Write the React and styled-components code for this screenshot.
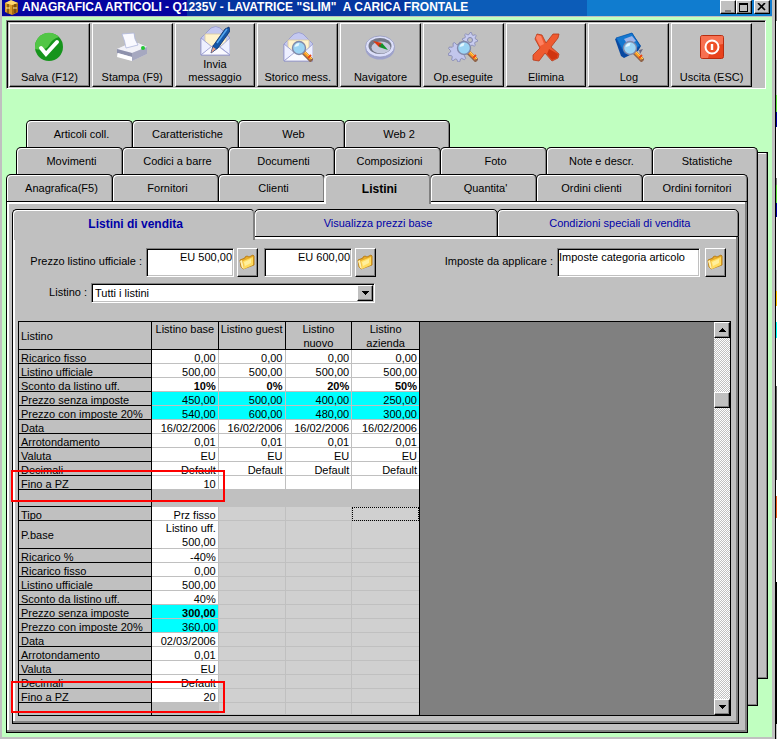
import React from "react";
import styled, { createGlobalStyle, css } from "styled-components";

const face = "#c0c0c0";
const shade = "#808080";
const mint = "#c0ffc0";

const GlobalStyle = createGlobalStyle`
  *, *::before, *::after { box-sizing: border-box; }
  body { margin: 0; background: ${face}; font: 11px/13px "Liberation Sans", Arial, sans-serif; color: #000; }
  button, input, select { font: inherit; color: inherit; margin: 0; border-radius: 0; }
`;

const Desktop = styled.div`
  display: grid;
  grid-template-columns: 1fr 1px 1px;
  min-height: 100vh;
`;
const WindowFrame = styled.main`
  display: flex;
  flex-direction: column;
  background: ${mint};
  border: solid ${face};
  border-width: 0 3px 2px 2px;
  overflow: hidden;
`;
const FrameEdge = styled.div`
  background: #000;
`;
const DesktopEdge = styled.div`
  background: linear-gradient(
    #808080 0 21px, #fff 21px 60px, #c0c0c0 60px 95px, #60e040 95px 112px, #0000a0 112px 127px,
    #fff 127px 178px, #808080 178px 185px, #60e040 185px 203px, #0000a0 203px 217px, #fff 217px 270px,
    #c0c0c0 270px 291px, #ffc000 291px 306px, #fff 306px 322px, #00ffff 322px 338px, #fff 338px 386px,
    #606060 386px 480px, #fff 480px 496px, #f06020 496px 518px, #fff 518px 582px, #000 582px 724px, #c0c0c0 724px
  );
`;

const TitleBar = styled.header`
  display: flex;
  align-items: center;
  height: 17px;
  padding: 0 2px 2px 2px;
  border-bottom: 1px solid ${face};
  background: linear-gradient(90deg, #0505a0 0 24%, #0535a0 24% 53%, #0c5cb8 53% 76%, #107ccf 76%);
`;
const Title = styled.h1`
  flex: 1;
  margin: 0 0 0 3px;
  color: #fff;
  font-size: 12px;
  line-height: 14px;
  font-weight: bold;
  white-space: pre;
`;
const raised = css`
  background: ${face};
  border: 1px solid;
  border-color: #fff #000 #000 #fff;
  box-shadow: inset -1px -1px 0 ${shade};
`;
const CaptionButton = styled.button`
  ${raised}
  display: grid;
  place-items: center;
  width: 16px;
  height: 14px;
  padding: 0;
  margin-left: ${(p) => (p.$apart ? "2px" : "0")};
`;

const Toolbar = styled.nav`
  display: grid;
  grid-template-columns: repeat(9, 1fr);
  gap: 2px;
  margin: 3px 6px 0 4px;
  padding: 2px 13px 1px 2px;
  background: ${face};
  border: 1px solid;
  border-color: ${shade} #fff #fff ${shade};
  box-shadow: inset 1px 1px 0 #000;
`;
const ToolButton = styled.button`
  ${raised}
  display: flex;
  flex-direction: column;
  align-items: center;
  justify-content: space-between;
  height: 64px;
  padding: ${(p) => (p.$tall ? "2px 0 2px" : "8px 0 2px")};
  line-height: 13px;
  white-space: pre;
  svg { display: block; }
`;

const LayerStack = styled.section`
  display: grid;
  margin: 31px 4px 4px;
`;
const Layer = styled.div`
  grid-area: 1 / 1;
  display: flex;
  flex-direction: column;
  min-width: 0;
  margin: ${(p) => `${(2 - p.$depth) * 27}px ${20 - p.$depth * 10}px ${p.$depth * 27}px ${p.$depth * 10}px`};
`;
const TabRow = styled.div`
  display: grid;
  grid-template-columns: repeat(${(p) => p.$columns}, 1fr);
  height: ${(p) => p.$height}px;
`;
const Tab = styled.button`
  background: ${face};
  border: 1px solid #000;
  border-bottom: ${(p) => (p.$seam ? "1px solid #000" : "0")};
  border-radius: 5px 5px 0 0;
  box-shadow: inset 1px 1px 0 #fff, inset -1px 0 0 ${shade};
  padding: ${(p) => (p.$behind ? "0 0 5px 4px" : "1px 0 0 4px")};
  min-width: 0;
  white-space: nowrap;
  color: ${(p) => (p.$blue ? "#0000a8" : "#000")};
  &:not(:last-child) { margin-right: -1px; }
  ${(p) => p.$active && css`
    position: relative;
    z-index: 1;
    font-weight: bold;
    font-size: 12px;
    border-bottom: 0;
    border-left-color: ${p.$seam ? "#000" : "#fff"};
    border-right-color: ${shade};
    margin-bottom: -3px;
    padding-bottom: 2px;
  `}
`;
const BackPage = styled.div`
  flex: 1;
  background: ${face};
  border: 1px solid #000;
  border-top-width: ${(p) => (p.$topLine ? "1px" : "0")};
  box-shadow: inset -1px -1px 0 ${shade}, inset 0 ${(p) => (p.$topLine ? "1px" : "0")} 0 #fff;
`;
const Page = styled.div`
  flex: 1;
  background: ${face};
  border: 1px solid #000;
  border-top-width: ${(p) => (p.$inner ? "0" : "1px")};
  box-shadow: inset -2px -2px 0 ${shade}, inset 2px 2px 0 #fff;
  padding: ${(p) => (p.$inner ? "11px 7px 7px 5px" : "7px 8px 8px 5px")};
`;

const FormRow = styled.div`
  display: flex;
  align-items: center;
  margin-bottom: ${(p) => p.$after}px;
`;
const FieldLabel = styled.label`
  width: ${(p) => (p.$width ? `${p.$width}px` : "auto")};
  margin-left: ${(p) => (p.$push ? "auto" : "0")};
  margin-right: 4px;
  padding-bottom: 2px;
  text-align: right;
  white-space: nowrap;
`;
const sunken = css`
  background: #fff;
  border: 1px solid;
  border-color: ${shade} #fff #fff ${shade};
  box-shadow: inset 1px 1px 0 #000, inset -1px -1px 0 ${face};
  outline: none;
`;
const TextField = styled.input`
  ${sunken}
  width: ${(p) => p.$width}px;
  height: 29px;
  padding: 0 1px 11px;
  text-align: ${(p) => (p.$right ? "right" : "left")};
`;
const FolderButton = styled.button`
  ${raised}
  display: grid;
  place-items: center;
  width: 21px;
  height: 29px;
  padding: 0;
  margin: 0 ${(p) => p.$after}px 0 ${(p) => p.$before}px;
`;
const Combo = styled.div`
  display: grid;
  grid-template-columns: 1fr 16px;
  width: 284px;
  height: 20px;
  padding: 1px;
  ${sunken}
`;
const ComboSelect = styled.select`
  grid-area: 1 / 1 / 2 / 3;
  appearance: none;
  background: transparent;
  border: 0;
  outline: none;
  padding: 0 18px 0 2px;
`;
const ComboArrow = styled.span`
  grid-area: 1 / 2;
  ${raised}
  display: grid;
  place-items: center;
  pointer-events: none;
`;

const GridPane = styled.div`
  position: relative;
  display: grid;
  grid-template-columns: 402px 1fr 17px;
  background: ${shade};
  border-top: 1px solid #000;
  border-bottom: 1px solid #000;
`;
const PriceTable = styled.table`
  table-layout: fixed;
  width: 402px;
  border-spacing: 0;
  border-left: 1px solid #000;
  border-right: 1px solid #000;
  background: ${face};
`;
const LabelCol = styled.col`
  width: 133px;
`;
const HeadCell = styled.th`
  height: 28px;
  padding: ${(p) => (p.$side ? "0 0 0 2px" : "0")};
  vertical-align: ${(p) => (p.$side ? "middle" : "top")};
  text-align: ${(p) => (p.$side ? "left" : "center")};
  font-weight: normal;
  line-height: 14px;
  white-space: pre;
  box-shadow: inset 0 -1px 0 #000;
  border-right: 1px solid #000;
  &:last-child { border-right: 0; }
`;
const RowLabel = styled.th`
  height: ${(p) => p.$height}px;
  padding: ${(p) => (p.$height > 14 ? "0 0 0 2px" : "3px 0 0 2px")};
  text-align: left;
  font-weight: normal;
  line-height: 10px;
  white-space: nowrap;
  border-bottom: ${(p) => (p.$last ? "0" : "1px solid #000")};
  border-right: 1px solid #000;
`;
const tones = { white: "#fff", cyan: "#00ffff", blank: face, off: "#d0d0d0" };
const Cell = styled.td`
  padding: ${(p) => (p.$two ? "0 2px 0 0" : "3px 2px 0 0")};
  text-align: right;
  line-height: ${(p) => (p.$two ? "14px" : "10px")};
  white-space: pre;
  font-weight: ${(p) => (p.$bold ? "bold" : "normal")};
  background: ${(p) => tones[p.$tone]};
  border-right: 1px solid ${face};
  border-bottom: ${(p) => (p.$two ? "0" : `1px solid ${face}`)};
  box-shadow: ${(p) => (p.$two ? `inset 0 -1px 0 ${face}` : "none")};
  &:last-child { border-right: 0; }
  ${(p) => p.$focus && css`outline: 1px dotted #000; outline-offset: -1px;`}
`;

const ScrollBar = styled.div`
  display: grid;
  grid-template-rows: 16px 54px 16px 1fr 16px;
  border-right: 1px solid #000;
  background: repeating-conic-gradient(${face} 0 25%, #fff 0 50%) 0 0 / 2px 2px;
`;
const ScrollButton = styled.button`
  ${raised}
  display: grid;
  place-items: center;
  grid-row: ${(p) => p.$row};
  padding: 0;
`;
const RedMark = styled.div`
  position: absolute;
  left: -7px;
  top: ${(p) => p.$top}px;
  width: 214px;
  height: 32px;
  border: 2px solid #f00;
  pointer-events: none;
`;

const Arrow = ({ up }) => (
  <svg width="7" height="4" viewBox="0 0 7 4" shapeRendering="crispEdges" aria-hidden="true">
    <path d={up ? "M3 0h1v1h1v1h1v1h1v1H0V3h1V2h1V1h1z" : "M0 0h7v1H6v1H5v1H4v1H3V3H2V2H1V1H0z"} />
  </svg>
);

const Svg = ({ children, size = 30 }) => (
  <svg width={size} height={size} viewBox="0 0 30 30" aria-hidden="true">{children}</svg>
);
const Lens = () => (
  <g>
    <path d="M20 20l9 9" stroke="#90654a" strokeWidth="4.5" />
    <path d="M21 20l7 7" stroke="#ff9a22" strokeWidth="3" />
    <path d="M22 20l7 7" stroke="#ffd858" strokeWidth="1" />
    <path d="M25 26l3-3" stroke="#e84818" strokeWidth="2" />
    <circle cx="16" cy="16" r="6.5" fill="#9bd4f4" stroke="#8088a8" strokeWidth="1.4" />
    <path d="M11.5 15a5 5 0 0 1 5-4l-1 3z" fill="#e3f7ff" />
  </g>
);
const Envelope = () => (
  <g stroke="#9498cc" strokeWidth=".8" strokeLinejoin="round">
    <path d="M1 12L11 2q5-3 9 0l10 10v17H1z" fill="#c4c8f0" />
    <path d="M5 8h21v13H5z" fill="#fff3cd" stroke="#d8c8a0" />
    <path d="M1 12l11 9-11 8zM30 12l-10 9 10 8z" fill="#eef0ff" />
    <path d="M1 29l11-9q3-2 6 0l12 9z" fill="#fafaff" />
  </g>
);
const gearPath = (cx, cy, r, n) => {
  const pts = [];
  for (let i = 0; i < n * 4; i++) {
    const a = (i / (n * 4)) * Math.PI * 2;
    const q = i % 4 < 2 ? r : r * 0.74;
    pts.push(`${(cx + q * Math.cos(a)).toFixed(1)} ${(cy + q * Math.sin(a)).toFixed(1)}`);
  }
  return `M${pts.join("L")}z`;
};

const icons = {
  save: (
    <Svg>
      <circle cx="15" cy="15" r="14" fill="#16941c" />
      <path d="M1 15a14 14 0 0 1 24-10Q18 7 15 13T1 17z" fill="#52c646" />
      <path d="M7 16l5 6L23 10" fill="none" stroke="#fff" strokeWidth="4" strokeLinecap="round" />
    </Svg>
  ),
  print: (
    <Svg>
      <path d="M0 17l9-4 12-2 9 4v7l-15 7L0 24z" fill="#d8d8e4" />
      <path d="M0 17l9-4 12-2 9 4-15 6z" fill="#f2f2f8" />
      <path d="M0 17l15 4v4L0 21z" fill="#8e92ac" />
      <path d="M15 21l15-6v7l-15 7z" fill="#a6a8c0" />
      <path d="M1 21l14 4v4L0 25z" fill="#fff" />
      <path d="M5 2l12-1q0 6 4 12L9 16Q8 9 5 2z" fill="#fafaff" stroke="#b0b8dc" strokeWidth=".8" />
      <circle cx="26" cy="16" r="2" fill="#20c830" />
    </Svg>
  ),
  compose: (
    <Svg>
      <Envelope />
      <path d="M11 27l2-7L25 3l4-2 1 4L18 22z" fill="#1456a8" stroke="#0a2c68" strokeWidth=".8" />
      <path d="M17 17L27 3" stroke="#58a8f0" strokeWidth="1.5" />
      <path d="M11 27l2-6 3 2z" fill="#e8a088" />
    </Svg>
  ),
  history: <Svg><Envelope /><Lens /></Svg>,
  compass: (
    <Svg>
      <ellipse cx="15" cy="17" rx="14.5" ry="10.5" fill="#9ea2cc" />
      <ellipse cx="15" cy="14.5" rx="14.5" ry="10.5" fill="#dcdffa" stroke="#8c90b8" strokeWidth=".7" />
      <ellipse cx="15" cy="14" rx="11.5" ry="8" fill="#747888" />
      <ellipse cx="16" cy="15.5" rx="9.5" ry="6" fill="#c4c8dc" />
      <path d="M8 9l9 2-3 4z" fill="#e03810" />
      <path d="M17 11l6 7-9-3z" fill="#109428" />
      <circle cx="15" cy="13.5" r="1.2" fill="#553" />
    </Svg>
  ),
  gears: (
    <Svg>
      <path d={gearPath(22, 8, 7.5, 8)} fill="#c8ccf0" stroke="#8488b4" strokeWidth=".8" />
      <circle cx="22" cy="8" r="2.5" fill={face} stroke="#8488b4" />
      <path d={gearPath(10, 20, 10, 9)} fill="#c2c6ec" stroke="#8084b0" strokeWidth=".8" />
      <Lens />
    </Svg>
  ),
  remove: (
    <Svg>
      <path d="M6 2l5 1 4 8 7-9h6l-1 4-7 9 8 7-1 4-6 3-7-8-6 8-6-1v-5l7-7-5-9z" fill="#ef5a30" stroke="#b83818" strokeWidth=".8" strokeLinejoin="round" />
      <path d="M6 3l4 1 3 8-4 2-4-8z" fill="#ff8060" />
      <path d="M18 17l9 5-1 4-5 2-5-6z" fill="#d03410" />
    </Svg>
  ),
  log: (
    <Svg>
      <path d="M1 7L18 1l9 13-3 5-14 7-3-2z" fill="#0848a0" />
      <path d="M2 6L18 1l8 13-15 8z" fill="#1478d0" stroke="#0a58b0" strokeWidth=".8" />
      <path d="M10 7l8-3 4 5-8 4z" fill="#9eb4e8" />
      <path d="M25 18l4-1-3 5z" fill="#6a6a80" />
      <Lens />
    </Svg>
  ),
  power: (
    <Svg>
      <rect x="3.5" y="3.5" width="23" height="23" rx="2" fill="#e8421c" stroke="#b82c10" />
      <path d="M4 5q0-1 1-1h20q1 0 1 1v7Q14 13 11 26H5q-1 0-1-1z" fill="#f77050" />
      <circle cx="15" cy="15" r="6.5" fill="#ee5028" stroke="#fff" strokeWidth="2" />
      <path d="M15 12v6" stroke="#fff" strokeWidth="2.4" />
    </Svg>
  ),
};
const FolderIcon = () => (
  <svg width="17" height="17" viewBox="0 0 17 17" aria-hidden="true">
    <path d="M1 6l5-2V3l2-1 2 1 4-2 1 1v9l-11 4-2-2z" fill="#e8ac28" stroke="#b87a10" strokeWidth=".9" strokeLinejoin="round" />
    <path d="M4 7l10-4v8L5 15z" fill="#ffdc60" />
    <path d="M5 8l7-3v4L6 12z" fill="#ffef9c" />
    <path d="M1 7l2-1 2 9-2-1z" fill="#fff0b0" />
  </svg>
);
const AppIcon = () => (
  <svg width="15" height="15" viewBox="0 0 15 15" aria-hidden="true">
    <path d="M1 3l6-2 7 2v9l-6 3-7-3z" fill="#d89a28" />
    <path d="M8 5l6-2v9l-6 3z" fill="#a86c10" />
    <path d="M1 3l6-3 7 3-6 2z" fill="#ffd870" />
    <path d="M4 4v10M11 4v9" stroke="#604008" strokeWidth="1.2" />
    <path d="M2 8h4M9 8h4" stroke="#ffe8a0" />
  </svg>
);

const tools = [
  ["save", "Salva (F12)"],
  ["print", "Stampa (F9)"],
  ["compose", "Invia\nmessaggio"],
  ["history", "Storico mess."],
  ["compass", "Navigatore"],
  ["gears", "Op.eseguite"],
  ["remove", "Elimina"],
  ["log", "Log"],
  ["power", "Uscita (ESC)"],
];
const backTabs = ["Articoli coll.", "Caratteristiche", "Web", "Web 2"];
const middleTabs = ["Movimenti", "Codici a barre", "Documenti", "Composizioni", "Foto", "Note e descr.", "Statistiche"];
const frontTabs = ["Anagrafica(F5)", "Fornitori", "Clienti", "Listini", "Quantita'", "Ordini clienti", "Ordini fornitori"];
const listTabs = ["Listini di vendita", "Visualizza prezzi base", "Condizioni speciali di vendita"];

const all = (v) => [v, v, v, v];
const firstBlock = [
  { label: "Ricarico fisso", values: all("0,00") },
  { label: "Listino ufficiale", values: all("500,00") },
  { label: "Sconto da listino uff.", values: ["10%", "0%", "20%", "50%"], bold: true },
  { label: "Prezzo senza imposte", values: ["450,00", "500,00", "400,00", "250,00"], tone: "cyan" },
  { label: "Prezzo con imposte 20%", values: ["540,00", "600,00", "480,00", "300,00"], tone: "cyan" },
  { label: "Data", values: all("16/02/2006") },
  { label: "Arrotondamento", values: all("0,01") },
  { label: "Valuta", values: all("EU") },
  { label: "Decimali", values: all("Default") },
  { label: "Fino a PZ", values: ["10", "", "", ""] },
  { label: "", values: all(""), tone: "blank", height: 17 },
];
const secondBlock = [
  { label: "Tipo", value: "Prz fisso", focus: true },
  { label: "P.base", value: "Listino uff.\n500,00", height: 28 },
  { label: "Ricarico %", value: "-40%" },
  { label: "Ricarico fisso", value: "0,00" },
  { label: "Listino ufficiale", value: "500,00" },
  { label: "Sconto da listino uff.", value: "40%" },
  { label: "Prezzo senza imposte", value: "300,00", tone: "cyan", bold: true },
  { label: "Prezzo con imposte 20%", value: "360,00", tone: "cyan" },
  { label: "Data", value: "02/03/2006" },
  { label: "Arrotondamento", value: "0,01" },
  { label: "Valuta", value: "EU" },
  { label: "Decimali", value: "Default" },
  { label: "Fino a PZ", value: "20" },
  { label: "", value: "", tone: "blank", height: 12, last: true },
];

const Prices = () => (
  <PriceTable>
    <colgroup>
      <LabelCol />
      <col /><col /><col /><col />
    </colgroup>
    <thead>
      <tr>
        <HeadCell $side scope="col">Listino</HeadCell>
        {["Listino base", "Listino guest", "Listino\nnuovo", "Listino\nazienda"].map((h) => (
          <HeadCell key={h} scope="col">{h}</HeadCell>
        ))}
      </tr>
    </thead>
    <tbody>
      {firstBlock.map((r, i) => (
        <tr key={i}>
          <RowLabel scope="row" $height={r.height || 14}>{r.label}</RowLabel>
          {r.values.map((v, c) => (
            <Cell key={c} $tone={r.tone || "white"} $bold={r.bold}>{v}</Cell>
          ))}
        </tr>
      ))}
    </tbody>
    <tbody>
      {secondBlock.map((r, i) => (
        <tr key={i}>
          <RowLabel scope="row" $height={r.height || 14} $last={r.last}>{r.label}</RowLabel>
          <Cell $tone={r.tone || "white"} $bold={r.bold} $two={r.height === 28}>{r.value}</Cell>
          <Cell $tone="off" />
          <Cell $tone="off" />
          <Cell $tone="off" $focus={r.focus} />
        </tr>
      ))}
    </tbody>
  </PriceTable>
);

export default function App() {
  return (
    <Desktop>
      <GlobalStyle />
      <WindowFrame>
        <TitleBar>
          <AppIcon />
          <Title>{'ANAGRAFICA ARTICOLI - Q1235V - LAVATRICE "SLIM"  A CARICA FRONTALE'}</Title>
          <CaptionButton aria-label="Riduci">
            <svg width="10" height="9" viewBox="0 0 10 9"><path d="M2 7h6v2H2z" fill={shade} /></svg>
          </CaptionButton>
          <CaptionButton aria-label="Ingrandisci">
            <svg width="10" height="9" viewBox="0 0 10 9" shapeRendering="crispEdges"><path d="M0 0h9v9H0zM1 2v6h7V2z" fillRule="evenodd" /></svg>
          </CaptionButton>
          <CaptionButton aria-label="Chiudi" $apart>
            <svg width="10" height="8" viewBox="0 0 10 8"><path d="M1 0l7 7M8 0L1 7" stroke="#000" strokeWidth="1.6" /></svg>
          </CaptionButton>
        </TitleBar>

        <Toolbar>
          {tools.map(([icon, label]) => (
            <ToolButton key={icon} $tall={icon === "compose"}>
              {icons[icon]}
              <span>{label}</span>
            </ToolButton>
          ))}
        </Toolbar>

        <LayerStack>
          <Layer $depth={2}>
            <TabRow $columns={7} $height={32}>
              {backTabs.map((t) => <Tab key={t} $behind>{t}</Tab>)}
            </TabRow>
            <BackPage $topLine />
          </Layer>
          <Layer $depth={1}>
            <TabRow $columns={7} $height={32}>
              {middleTabs.map((t) => <Tab key={t} $behind>{t}</Tab>)}
            </TabRow>
            <BackPage />
          </Layer>
          <Layer $depth={0}>
            <TabRow $columns={7} $height={27}>
              {frontTabs.map((t) => <Tab key={t} $active={t === "Listini"}>{t}</Tab>)}
            </TabRow>
            <Page>
              <TabRow $columns={3} $height={28}>
                {listTabs.map((t, i) => <Tab key={t} $blue $seam $active={i === 0}>{t}</Tab>)}
              </TabRow>
              <Page $inner>
                <FormRow $after={6}>
                  <FieldLabel htmlFor="prezzo" $width={124}>Prezzo listino ufficiale :</FieldLabel>
                  <TextField id="prezzo" $width={88} $right defaultValue="EU 500,00" />
                  <FolderButton $before={3} $after={6} aria-label="Apri prezzo"><FolderIcon /></FolderButton>
                  <TextField $width={88} $right defaultValue="EU 600,00" aria-label="Prezzo con imposte" />
                  <FolderButton $before={3} $after={6} aria-label="Apri prezzo con imposte"><FolderIcon /></FolderButton>
                  <FieldLabel htmlFor="imposte" $push>Imposte da applicare :</FieldLabel>
                  <TextField id="imposte" $width={143} defaultValue="Imposte categoria articolo" />
                  <FolderButton $before={5} $after={5} aria-label="Apri imposte"><FolderIcon /></FolderButton>
                </FormRow>
                <FormRow $after={18}>
                  <FieldLabel htmlFor="listino" $width={69}>Listino :</FieldLabel>
                  <Combo>
                    <ComboSelect id="listino" defaultValue="all">
                      <option value="all">Tutti i listini</option>
                    </ComboSelect>
                    <ComboArrow><Arrow /></ComboArrow>
                  </Combo>
                </FormRow>
                <GridPane>
                  <Prices />
                  <div />
                  <ScrollBar>
                    <ScrollButton $row={1} aria-label="Su"><Arrow up /></ScrollButton>
                    <ScrollButton $row={3} aria-label="Posizione" />
                    <ScrollButton $row={5} aria-label="Giù"><Arrow /></ScrollButton>
                  </ScrollBar>
                  <RedMark $top={148} />
                  <RedMark $top={359} />
                </GridPane>
              </Page>
            </Page>
          </Layer>
        </LayerStack>
      </WindowFrame>
      <FrameEdge />
      <DesktopEdge />
    </Desktop>
  );
}
